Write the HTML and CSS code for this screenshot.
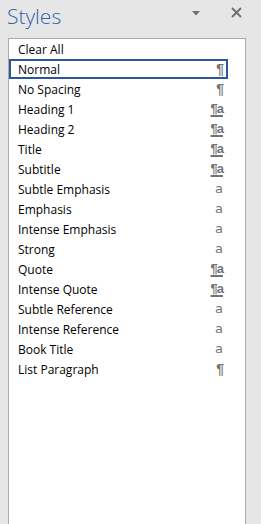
FILE: index.html
```html
<!DOCTYPE html>
<html>
<head>
<meta charset="utf-8">
<link rel="stylesheet" href="styles.css">
</head>
<body>
<div class="pane">
  <div class="header">
    <div class="title">Styles</div>
    <div class="controls">
      <svg class="dropdown" width="8" height="5" viewBox="0 0 8 5"><path d="M0 0 H8 L4 4.5 Z" fill="#707070"/></svg>
      <svg class="close" width="11" height="11" viewBox="0 0 11 11"><path d="M1 1 L10 10 M10 1 L1 10" stroke="#6e6e6e" stroke-width="1.8"/></svg>
    </div>
  </div>
  <div class="list">
    <div class="row"><span class="name">Clear All</span></div>
    <div class="row selected"><span class="name">Normal</span><span class="icon para">¶</span></div>
    <div class="row"><span class="name">No Spacing</span><span class="icon para">¶</span></div>
    <div class="row"><span class="name">Heading 1</span><span class="icon linked">¶a</span></div>
    <div class="row"><span class="name">Heading 2</span><span class="icon linked">¶a</span></div>
    <div class="row"><span class="name">Title</span><span class="icon linked">¶a</span></div>
    <div class="row"><span class="name">Subtitle</span><span class="icon linked">¶a</span></div>
    <div class="row"><span class="name">Subtle Emphasis</span><span class="icon char">a</span></div>
    <div class="row"><span class="name">Emphasis</span><span class="icon char">a</span></div>
    <div class="row"><span class="name">Intense Emphasis</span><span class="icon char">a</span></div>
    <div class="row"><span class="name">Strong</span><span class="icon char">a</span></div>
    <div class="row"><span class="name">Quote</span><span class="icon linked">¶a</span></div>
    <div class="row"><span class="name">Intense Quote</span><span class="icon linked">¶a</span></div>
    <div class="row"><span class="name">Subtle Reference</span><span class="icon char">a</span></div>
    <div class="row"><span class="name">Intense Reference</span><span class="icon char">a</span></div>
    <div class="row"><span class="name">Book Title</span><span class="icon char">a</span></div>
    <div class="row"><span class="name">List Paragraph</span><span class="icon para">¶</span></div>
  </div>
</div>
</body>
</html>
```
FILE: styles.css
```css
html, body {
  margin: 0;
  padding: 0;
}
body {
  background: #e6e6e6;
  font-family: "Open Sans", "Noto Sans", sans-serif;
}
.pane {
  display: flex;
  flex-direction: column;
  height: 524px;
  overflow: hidden;
}
.header {
  height: 38px;
  display: flex;
  align-items: flex-start;
  justify-content: space-between;
  padding-left: 7px;
  box-sizing: border-box;
}
.title {
  font-family: "Open Sans", sans-serif;
  font-weight: 300;
  font-size: 21px;
  line-height: 30px;
  margin-top: 1px;
  color: #2f63aa;
}
.controls {
  display: flex;
  align-items: flex-start;
}
.dropdown {
  margin-top: 11px;
  margin-right: 31px;
}
.close {
  margin-top: 7px;
  margin-right: 19px;
}
.list {
  flex: 1;
  margin-left: 8px;
  width: 238px;
  box-sizing: border-box;
  border: 1px solid #ababab;
  border-bottom: none;
  background: #ffffff;
}
.row {
  display: flex;
  align-items: center;
  justify-content: space-between;
  height: 20px;
  width: 219px;
  box-sizing: border-box;
  padding-left: 9px;
  padding-right: 4px;
  font-size: 12px;
  color: #000;
}
.row.selected {
  border: 2px solid #2b579a;
  padding-left: 7px;
  padding-right: 2px;
}
.name {
  white-space: nowrap;
}
.icon {
  color: #737373;
  font-family: "Liberation Sans", sans-serif;
  font-weight: bold;
  font-size: 14px;
  line-height: 14px;
}
.icon.linked {
  font-size: 13px;
  text-decoration: underline;
  text-decoration-thickness: 2px;
  text-underline-offset: 2px;
  letter-spacing: -1px;
  padding-right: 1px;
}
.icon.char {
  font-weight: normal;
  font-family: "DejaVu Sans", sans-serif;
  font-size: 13px;
  padding-right: 1px;
}
```
